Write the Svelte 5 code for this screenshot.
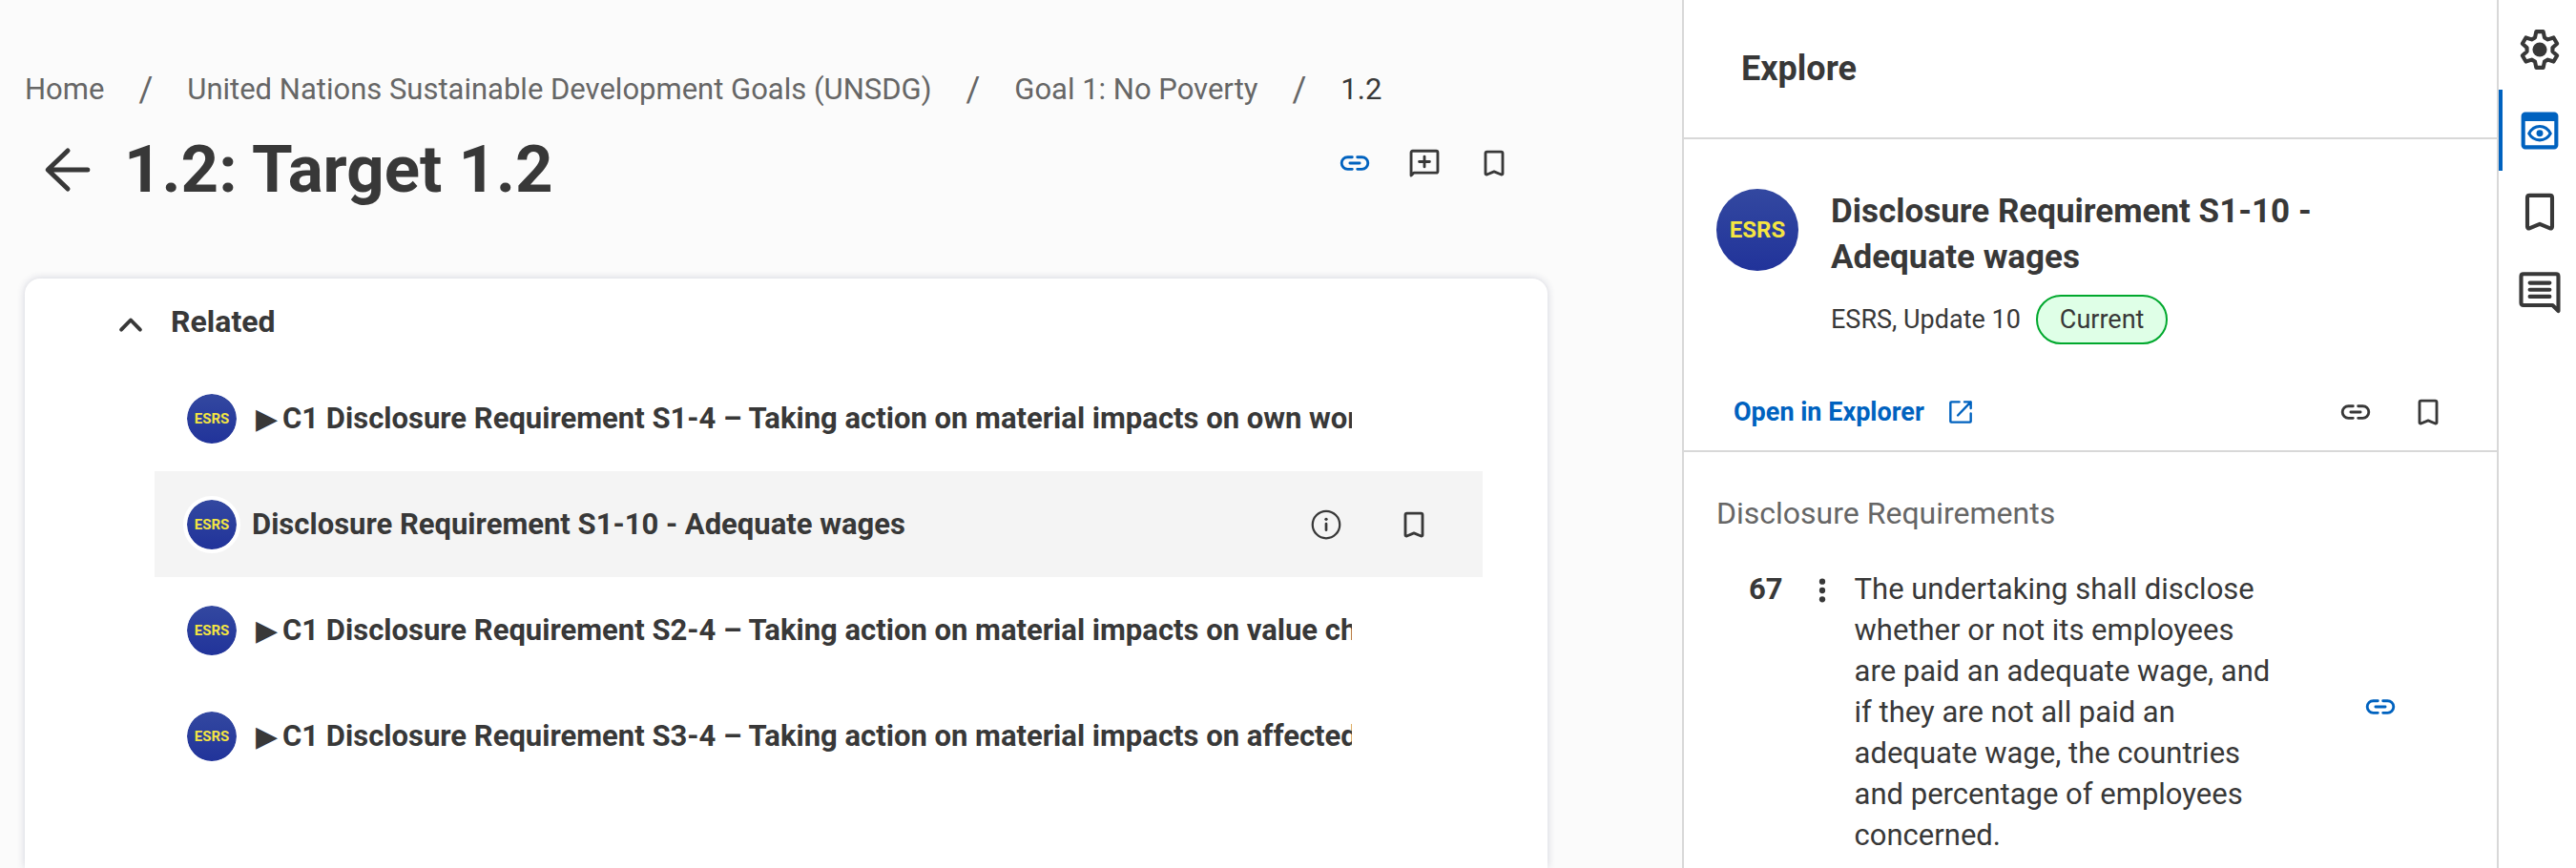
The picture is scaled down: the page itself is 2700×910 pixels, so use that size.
<script lang="ts">
	type Item = { arrow: boolean; name: string; active: boolean };

	const crumbs = ['Home', 'United Nations Sustainable Development Goals (UNSDG)', 'Goal 1: No Poverty'];

	const related: Item[] = [
		{
			arrow: true,
			name: 'C1 Disclosure Requirement S1-4 – Taking action on material impacts on own workforce',
			active: false
		},
		{ arrow: false, name: 'Disclosure Requirement S1-10 - Adequate wages', active: true },
		{
			arrow: true,
			name: 'C1 Disclosure Requirement S2-4 – Taking action on material impacts on value chain workers',
			active: false
		},
		{
			arrow: true,
			name: 'C1 Disclosure Requirement S3-4 – Taking action on material impacts on affected communities',
			active: false
		}
	];

	const tabs = [
		{ icon: 'settings', label: 'Settings' },
		{ icon: 'explore', label: 'Explore' },
		{ icon: 'bookmark', label: 'Bookmarks' },
		{ icon: 'comments', label: 'Comments' }
	];

	let currentTab = $state('explore');
	let open = $state(true);
</script>

{#snippet icon(name: string)}
	<svg class="icon" viewBox="0 0 24 24" fill="none" aria-hidden="true">
		{#if name === 'link'}
			<path d="M10.2 7.8H7a4.2 4.2 0 0 0 0 8.4h3.2M13.8 7.8H17a4.2 4.2 0 0 1 0 8.4h-3.2M8.6 12h6.8" />
		{:else if name === 'add-comment'}
			<path d="M2.7 20.6V4.6c0-.7.4-1.1 1.1-1.1h16.4c.7 0 1.1.4 1.1 1.1v13c0 .7-.4 1.1-1.1 1.1H4.7z" />
			<path d="M12 7.4v7.2M8.4 11h7.2" />
		{:else if name === 'bookmark'}
			<path d="M6 19.3V5.2c0-.7.4-1.1 1.1-1.1h9.8c.7 0 1.1.4 1.1 1.1v14.1c0 .6-.5.9-1 .7l-5-2.1-5 2.1c-.5.2-1-.1-1-.7z" />
		{:else if name === 'info'}
			<circle cx="12" cy="12" r="9.5" stroke-width="1.5" />
			<path d="M12 11.4v4.4" stroke-width="1.8" />
			<circle class="solid" cx="12" cy="8.2" r="1.1" />
		{:else if name === 'external'}
			<path d="M11 4H4.6c-.4 0-.6.2-.6.6v14.8c0 .4.2.6.6.6h14.8c.4 0 .6-.2.6-.6V13M15 4h5v5M20 4l-10.2 10.6" />
		{:else if name === 'more'}
			<circle class="solid" cx="12" cy="5.8" r="2.1" />
			<circle class="solid" cx="12" cy="12" r="2.1" />
			<circle class="solid" cx="12" cy="18.2" r="2.1" />
		{:else if name === 'chevron'}
			<path d="M5.4 17.8 12 11l6.6 6.8" stroke-width="2.6" />
		{:else if name === 'back'}
			<path d="M22 12H2.4M12 2.4 2 12l10 9.6" stroke-width="2.4" />
		{:else if name === 'settings'}
			<path
				d="M10.3 3.3h3.4l.6 2.9 1.6.9 2.8-.9 1.7 2.9-2.2 2v1.8l2.2 2-1.7 2.9-2.8-.9-1.6.9-.6 2.9h-3.4l-.6-2.9-1.6-.9-2.8.9-1.7-2.9 2.2-2v-1.8l-2.2-2 1.7-2.9 2.8.9 1.6-.9z"
			/>
			<circle class="solid" cx="12" cy="12" r="3.5" />
		{:else if name === 'explore'}
			<rect x="4" y="4" width="16" height="16" rx="1" />
			<path class="solid" d="M3.5 4h17v3.4h-17z" />
			<path d="M6.8 13.4c2.4-4.6 8-4.6 10.4 0-2.4 4.2-8 4.2-10.4 0z" stroke-width="1.4" />
			<circle class="solid" cx="12" cy="13.3" r="1.6" />
		{:else if name === 'comments'}
			<path d="M21 20.8V4c0-.7-.4-1.100-1.100-1.100H4.100C3.400 2.900 3 3.300 3 4v12.900c0 .7.4 1.100 1.100 1.100h14.100z" />
			<path d="M7.200 7.200h9.600M7.200 10.500h9.600M7.200 13.800h9.600" />
		{/if}
	</svg>
{/snippet}

<div class="page">
	<main>
		<nav class="breadcrumb" aria-label="Breadcrumb">
			{#each crumbs as crumb}
				<a href="#top">{crumb}</a>
				<span class="slash">/</span>
			{/each}
			<span class="current">1.2</span>
		</nav>

		<header class="title">
			<button class="back" aria-label="Back">{@render icon('back')}</button>
			<h1>1.2: Target 1.2</h1>
			<div class="title-actions">
				<button class="link" aria-label="Copy link">{@render icon('link')}</button>
				<button aria-label="Add comment">{@render icon('add-comment')}</button>
				<button aria-label="Bookmark">{@render icon('bookmark')}</button>
			</div>
		</header>

		<section class="card">
			<button class="card-toggle" aria-expanded={open} onclick={() => (open = !open)}>
				{@render icon('chevron')}
				Related
			</button>
			{#if open}
				<ul>
					{#each related as item}
						<li class:active={item.active}>
							<span class="logo">ESRS</span>
							<a class="name" href="#item">
								{#if item.arrow}<span class="arrow">▶</span>{/if}{item.name}
							</a>
							{#if item.active}
								<div class="row-actions">
									<button aria-label="Info">{@render icon('info')}</button>
									<button aria-label="Bookmark">{@render icon('bookmark')}</button>
								</div>
							{/if}
						</li>
					{/each}
				</ul>
			{/if}
		</section>
	</main>

	<aside>
		<header class="panel-header">
			<h2>Explore</h2>
		</header>

		<section class="summary">
			<div class="summary-top">
				<span class="logo large">ESRS</span>
				<div class="summary-text">
					<h3>Disclosure Requirement S1-10 - Adequate wages</h3>
					<div class="meta">
						<span>ESRS, Update 10</span>
						<span class="pill">Current</span>
					</div>
				</div>
			</div>
			<div class="summary-actions">
				<a class="open" href="#explorer">
					Open in Explorer
					{@render icon('external')}
				</a>
				<button aria-label="Copy link">{@render icon('link')}</button>
				<button aria-label="Bookmark">{@render icon('bookmark')}</button>
			</div>
		</section>

		<section class="details">
			<h4>Disclosure Requirements</h4>
			<div class="paragraph">
				<strong>67</strong>
				<button class="more" aria-label="More">{@render icon('more')}</button>
				<p>
					The undertaking shall disclose whether or not its employees are paid an adequate wage, and
					if they are not all paid an adequate wage, the countries and percentage of employees
					concerned.
				</p>
				<button class="link" aria-label="Copy link">{@render icon('link')}</button>
			</div>
		</section>
	</aside>

	<nav class="rail" aria-label="Tools">
		{#each tabs as tab}
			<button
				class:selected={currentTab === tab.icon}
				aria-label={tab.label}
				onclick={() => (currentTab = tab.icon)}
			>
				{@render icon(tab.icon)}
			</button>
		{/each}
	</nav>
</div>

<style>
	:global(body) {
		background: #fff;
	}

	.page {
		--fg: #383838;
		--fg-subtle: #666;
		--accent: #0062bf;
		--line: #d8d8d8;

		display: flex;
		box-sizing: border-box;
		height: 100vh;
		overflow: hidden;
		color: var(--fg);
		font-family: Roboto, 'Liberation Sans', sans-serif;
		font-size: 31px;
		line-height: 44px;
	}

	h1,
	h2,
	h3,
	h4,
	p,
	ul {
		margin: 0;
		padding: 0;
	}

	a {
		color: inherit;
		text-decoration: none;
	}

	button {
		display: flex;
		flex: none;
		align-items: center;
		padding: 0;
		border: none;
		background: none;
		color: inherit;
		font: inherit;
		cursor: pointer;
	}

	.icon {
		display: block;
		flex: none;
		width: 36px;
		height: 36px;
		stroke: currentColor;
		stroke-width: 1.9;
		stroke-linecap: round;
		stroke-linejoin: round;
	}

	.solid {
		fill: currentColor;
		stroke: none;
	}

	.link {
		color: var(--accent);
	}

	main {
		display: flex;
		flex: 1;
		flex-direction: column;
		min-width: 0;
		padding: 72px 141px 0 26px;
		background: #fbfbfb;
	}

	.breadcrumb {
		display: flex;
		align-items: center;
		gap: 36px;
		color: var(--fg-subtle);
		white-space: nowrap;
	}

	.slash {
		font-size: 36px;
	}

	.current {
		color: var(--fg);
	}

	.title {
		display: flex;
		align-items: center;
		margin-top: 22px;
		padding: 0 38px 0 20px;
	}

	.back .icon {
		width: 50px;
		height: 50px;
	}

	h1 {
		flex: 1;
		margin-left: 34px;
		font-size: 69px;
		line-height: 80px;
	}

	.title-actions {
		display: flex;
		align-self: flex-start;
		gap: 37px;
		padding-top: 15px;
	}

	.card {
		flex: 1;
		margin-top: 74px;
		padding: 23px 68px 0 93px;
		border-radius: 16px 16px 0 0;
		background: #fff;
		box-shadow: 0 0 8px rgba(40, 45, 90, 0.2);
	}

	.card-toggle {
		gap: 24px;
		font-size: 32px;
		font-weight: 700;
	}

	ul {
		margin: 24px 0 0 43px;
		list-style: none;
	}

	li {
		display: flex;
		align-items: center;
		gap: 12px;
		height: 111px;
		padding: 0 54px 0 30px;
	}

	li.active {
		background: #f4f4f4;
	}

	.logo {
		display: flex;
		flex: none;
		align-items: center;
		justify-content: center;
		width: 52px;
		height: 52px;
		border: 4px solid #fff;
		border-radius: 50%;
		background: linear-gradient(#3348a0, #21339a) padding-box;
		color: #f4e542;
		font-size: 15px;
		font-weight: 700;
		line-height: 20px;
	}

	.logo.large {
		width: 86px;
		height: 86px;
		border: none;
		font-size: 24px;
	}

	.name {
		flex: 1;
		overflow: hidden;
		font-weight: 700;
		white-space: nowrap;
	}

	li:not(.active) .name {
		margin-right: 83px;
	}

	.arrow {
		margin: 0 5px 0 4px;
		font-family: 'DejaVu Sans', sans-serif;
		font-size: 30px;
		font-weight: 400;
		line-height: 32px;
	}

	.row-actions {
		display: flex;
		gap: 56px;
	}

	aside {
		box-sizing: border-box;
		flex: none;
		width: 854px;
		border-left: 2px solid var(--line);
		background: #fff;
	}

	.panel-header {
		padding: 50px 60px;
		border-bottom: 2px solid var(--line);
	}

	h2 {
		font-size: 36px;
		line-height: 44px;
	}

	.summary {
		padding: 52px 54px 22px 34px;
		border-bottom: 2px solid var(--line);
	}

	.summary-top {
		display: flex;
		gap: 34px;
		padding-right: 110px;
	}

	h3 {
		font-size: 35px;
		line-height: 48px;
	}

	.meta {
		display: flex;
		align-items: center;
		gap: 16px;
		margin-top: 15px;
		font-size: 27px;
	}

	.pill {
		padding: 2px 23px;
		border: 2px solid #00a82d;
		border-radius: 26px;
		background: #dfffe7;
	}

	.summary-actions {
		display: flex;
		align-items: center;
		gap: 40px;
		margin-top: 53px;
		padding-left: 18px;
	}

	.open {
		display: flex;
		flex: 1;
		align-items: center;
		gap: 22px;
		color: var(--accent);
		font-size: 27px;
		font-weight: 700;
		line-height: 36px;
	}

	.open .icon {
		width: 32px;
		height: 32px;
		stroke-width: 1.8;
	}

	.details {
		padding: 42px 104px 0 34px;
	}

	h4 {
		color: var(--fg-subtle);
		font-size: 32px;
		font-weight: 400;
	}

	.paragraph {
		display: flex;
		align-items: flex-start;
		margin-top: 36px;
		padding-left: 34px;
		line-height: 43px;
	}

	.more {
		margin: 5px 16px 0 23px;
	}

	.paragraph p {
		flex: 1;
	}

	.paragraph .link {
		align-self: center;
		margin-left: 91px;
		padding-bottom: 12px;
	}

	.rail {
		box-sizing: border-box;
		flex: none;
		width: 83px;
		padding-top: 9px;
		border-left: 2px solid var(--line);
		background: #fff;
	}

	.rail button {
		box-sizing: border-box;
		justify-content: center;
		width: 100%;
		height: 85px;
		border-left: 4px solid transparent;
	}

	.rail button.selected {
		border-color: var(--accent);
		color: var(--accent);
	}

	.rail .icon {
		width: 52px;
		height: 52px;
	}
</style>
